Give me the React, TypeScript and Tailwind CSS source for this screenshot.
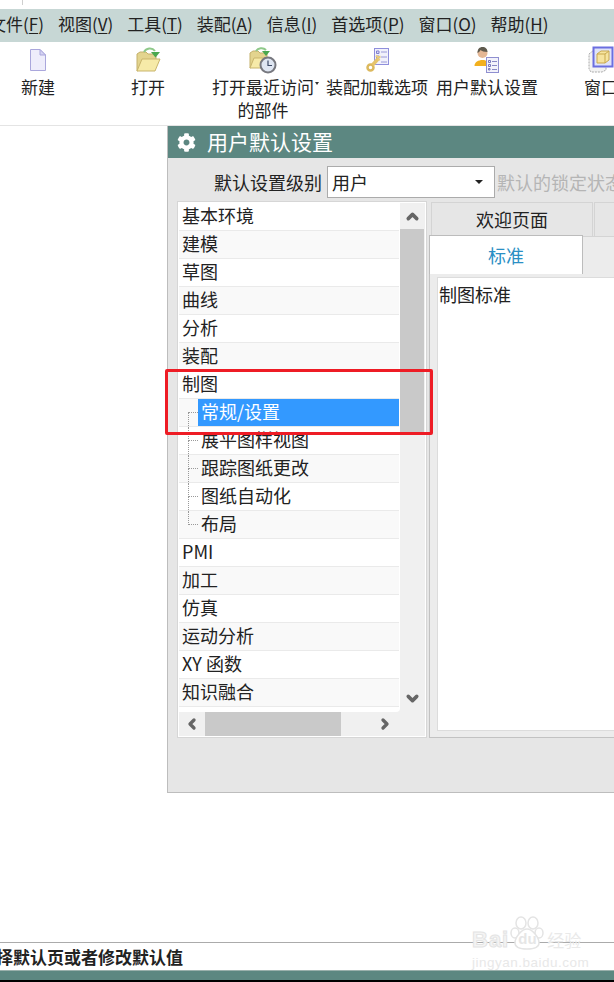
import { ChevronDown, ChevronLeft, ChevronRight, ChevronUp } from 'lucide-react';
import { FaCog } from 'react-icons/fa';

const menus = [
  ['文件(', 'F', ')'],
  ['视图(', 'V', ')'],
  ['工具(', 'T', ')'],
  ['装配(', 'A', ')'],
  ['信息(', 'I', ')'],
  ['首选项(', 'P', ')'],
  ['窗口(', 'O', ')'],
  ['帮助(', 'H', ')'],
];

function DocIcon() {
  return (
    <svg width="28" height="28" viewBox="0 0 28 28">
      <path d="M6.500 3.500h9.500l5.500 5.500v15.500H6.500z" fill="#eeedfb" stroke="#aaa7dc" />
      <path d="M16 3.500v5.500h5.500z" fill="#d5d3f2" stroke="#aaa7dc" />
    </svg>
  );
}

function FolderIcon() {
  return (
    <svg width="28" height="28" viewBox="0 0 28 28">
      <path d="M3 25V8l3-2h6l2 2h8v6z" fill="#e3d48e" stroke="#c4b06a" />
      <path d="M3 25l5-12h18l-5 12z" fill="#f6eaa8" stroke="#c9b56c" />
      <path d="M10 6c2-4 8-5 11-1" fill="none" stroke="#8fc98a" strokeWidth="2" />
      <path d="M17 6h9l-4.500 5.500z" fill="#4aa84f" />
    </svg>
  );
}

function RecentIcon() {
  return (
    <svg width="28" height="28" viewBox="0 0 28 28">
      <path d="M1 22V7l3-2h5l2 2h7v6z" fill="#e3d48e" stroke="#c4b06a" />
      <path d="M1 22l4-10h15l-4 10z" fill="#f6eaa8" stroke="#c9b56c" />
      <path d="M7 5c2-3 7-4 10-1" fill="none" stroke="#8fc98a" strokeWidth="2" />
      <path d="M13 5h8l-4 5z" fill="#4aa84f" />
      <circle cx="19" cy="19" r="7.500" fill="#dfe6f2" stroke="#77787f" strokeWidth="2" />
      <path d="M19 14.500V19.500h4" fill="none" stroke="#3d4a66" strokeWidth="1.200" />
    </svg>
  );
}

function KeyListIcon() {
  return (
    <svg width="28" height="28" viewBox="0 0 28 28">
      <rect x="11.500" y="2.500" width="14" height="16" fill="#f1f1fb" stroke="#8f8fdc" />
      <path d="M13.500 5h2.500v2.500h-2.500zM13.500 10h2.500v2.500h-2.500z" fill="#dcdcf6" stroke="#7f7fcf" />
      <path d="M18 6h6M18 11h6M18 16h6" stroke="#9a9ad8" />
      <circle cx="7.500" cy="21.500" r="3" fill="none" stroke="#dcb95e" strokeWidth="2.500" />
      <path d="M9.500 19l6-6.500" stroke="#e6c46a" strokeWidth="3.500" />
      <path d="M13 9.500l2 2 2.500-1M16.500 14.500l-1.500-2" fill="none" stroke="#e9cd7c" strokeWidth="2" />
    </svg>
  );
}

function PersonListIcon() {
  return (
    <svg width="28" height="28" viewBox="0 0 28 28">
      <circle cx="9.500" cy="7" r="5" fill="#e4b795" />
      <path d="M4.500 7c0-4 2-6 5-6s5 2 5 5c-3 0-6-1-7-2-.5 1-1 2-3 3z" fill="#5f5a4e" />
      <path d="M1.500 20c0-4 4-6 8-6s5 2 6 3v3z" fill="#f2b01e" />
      <rect x="13.500" y="11.500" width="12" height="15" fill="#f2f2fb" stroke="#8f8fd0" />
      <path d="M15.500 14.500h2v2h-2zM15.500 18.500h2v2h-2zM15.500 22.500h1.500v1.500h-1.500z" fill="none" stroke="#7777bb" />
      <path d="M19 15.500h5M19 19.500h5M19 23.500h5" stroke="#8888c4" />
    </svg>
  );
}

function WindowIcon() {
  return (
    <svg width="28" height="28" viewBox="0 0 28 28">
      <path d="M2 8l5-4h12v20l-4 2H4l-2-3z" fill="#f2f2f2" stroke="#aaaaaa" strokeDasharray="2 1" />
      <rect x="6.500" y="1.500" width="19" height="19" fill="#dfe3f8" stroke="#6a6ee0" strokeWidth="2" />
      <path d="M10 8l4-3h8v9l-4 3h-8z" fill="#f6e4a0" stroke="#c9a94f" />
      <path d="M10 8h8v9M18 8l4-3" fill="none" stroke="#c9a94f" />
    </svg>
  );
}

const tools = [
  { w: 'w-[110px]', icon: <DocIcon />, label: '新建' },
  { w: 'w-[110px]', icon: <FolderIcon />, label: '打开' },
  { w: 'w-[120px]', icon: <RecentIcon />, label: '打开最近访问', second: '的部件', more: true },
  { w: 'w-[108px]', icon: <KeyListIcon />, label: '装配加载选项' },
  { w: 'w-[112px]', icon: <PersonListIcon />, label: '用户默认设置' },
  { w: 'w-[116px]', icon: <WindowIcon />, label: '窗口' },
];

type TreeRow = { label: string; child?: boolean; first?: boolean; last?: boolean; selected?: boolean };

const rows: TreeRow[] = [
  { label: '基本环境' },
  { label: '建模' },
  { label: '草图' },
  { label: '曲线' },
  { label: '分析' },
  { label: '装配' },
  { label: '制图' },
  { label: '常规/设置', child: true, first: true, selected: true },
  { label: '展平图样视图', child: true },
  { label: '跟踪图纸更改', child: true },
  { label: '图纸自动化', child: true },
  { label: '布局', child: true, last: true },
  { label: 'PMI' },
  { label: '加工' },
  { label: '仿真' },
  { label: '运动分析' },
  { label: 'XY 函数' },
  { label: '知识融合' },
];

function Connector({ first, last }: { first?: boolean; last?: boolean }) {
  return (
    <div className="ml-[9px] flex h-full w-[10px] shrink-0 flex-col">
      <div className={first ? 'h-[14px] border-b border-dotted border-[#999]' : 'h-[14px] border-b border-l border-dotted border-[#999]'} />
      <div className={last ? 'flex-1' : 'flex-1 border-l border-dotted border-[#999]'} />
    </div>
  );
}

function ListRow({ row, index }: { row: TreeRow; index: number }) {
  const bg = index % 2 === 0 ? 'bg-white' : 'bg-[#f9f9f9]';
  return (
    <div className={`flex h-[28px] w-[220px] items-stretch border-b border-[#eaeaea] text-[18px] leading-[25px] text-[#222] ${bg}`}>
      {row.child ? (
        <>
          <Connector first={row.first} last={row.last} />
          {row.selected ? (
            <div className="flex-1 bg-[#3399ff] pl-[3px] text-white">{row.label}</div>
          ) : (
            <div className="flex-1 pl-[3px]">{row.label}</div>
          )}
        </>
      ) : (
        <div className="pl-[3px]">{row.label}</div>
      )}
    </div>
  );
}

export default function App() {
  return (
    <div className="relative flex h-[982px] w-[614px] flex-col overflow-hidden bg-white font-['Noto_Sans_CJK_SC',sans-serif] text-[#222]">
      <div className="h-[9px] shrink-0">
        <div className="ml-[22px] h-[5px] w-px bg-[#cfcfcf]" />
      </div>

      {/* menu bar */}
      <div className="-ml-[11px] flex h-[33px] shrink-0 items-center gap-[14px] bg-[#c7d7d5] pb-[3px] text-[17px] whitespace-nowrap">
        {menus.map(([a, key, b]) => (
          <span key={a}>
            {a}
            <u className="underline-offset-2">{key}</u>
            {b}
          </span>
        ))}
      </div>

      {/* toolbar */}
      <div className="-ml-[17px] flex h-[84px] w-[660px] shrink-0 border-b border-[#e4e4e4] pt-[4px] text-[17px] leading-[23px]">
        {tools.map((t) => (
          <div key={t.label} className={`flex shrink-0 flex-col items-center whitespace-nowrap ${t.w}`}>
            <div className="mb-[1px] h-[28px]">{t.icon}</div>
            <div className="relative">
              {t.label}
              {t.more && <span className="absolute top-[7px] -right-[5px] h-0 w-0 border-x-[2px] border-t-[3px] border-x-transparent border-t-[#333]" />}
            </div>
            {t.second && <div>{t.second}</div>}
          </div>
        ))}
      </div>

      {/* dialog */}
      <div className="ml-[167px] flex h-[667px] w-[447px] shrink-0 flex-col border-b border-l border-[#bdbdbd] bg-[#e6e6e6]">
        <div className="flex h-[32px] shrink-0 items-center bg-[#5c8781] pl-[9px] text-[21px] text-white">
          <FaCog size={19} />
          <span className="ml-[11px] whitespace-nowrap">用户默认设置</span>
        </div>

        <div className="mt-[8px] flex h-[32px] shrink-0 items-center whitespace-nowrap text-[18px]">
          <span className="ml-[46px] w-[107px]">默认设置级别</span>
          <div className="ml-[6px] flex h-[32px] w-[168px] shrink-0 items-center justify-between border border-[#ababab] bg-white pr-[11px] pl-[4px]">
            <span>用户</span>
            <span className="h-0 w-0 border-x-[4px] border-t-[4px] border-x-transparent border-t-[#222]" />
          </div>
          <span className="ml-[2px] text-[#b5b5b5]">默认的锁定状态</span>
        </div>

        <div className="mt-[3px] flex h-[538px] shrink-0">
          {/* tree list */}
          <div className="ml-[9px] flex h-[537px] w-[250px] shrink-0 border border-[#d6d6d6] bg-white p-px">
            <div className="flex w-[221px] shrink-0 flex-col bg-[#f0f0f0]">
              <div className="h-[509px] shrink-0 rounded-br-[4px] bg-white">
                {rows.map((row, i) => (
                  <ListRow key={row.label} row={row} index={i} />
                ))}
              </div>
              <div className="flex h-[24px] shrink-0 items-center text-[#666]">
                <div className="flex w-[26px] justify-center">
                  <ChevronLeft size={16} strokeWidth={5} />
                </div>
                <div className="h-full w-[136px] bg-[#c9c9c9]" />
                <div className="ml-[36px] flex w-[16px] justify-center">
                  <ChevronRight size={16} strokeWidth={5} />
                </div>
              </div>
            </div>
            <div className="flex w-[25px] shrink-0 flex-col bg-[#f0f0f0] text-[#666]">
              <div className="flex h-[26px] shrink-0 items-center justify-center">
                <ChevronUp size={17} strokeWidth={5} />
              </div>
              <div className="h-[204px] w-[24px] shrink-0 bg-[#c9c9c9]" />
              <div className="flex-1" />
              <div className="mb-[25px] flex h-[26px] shrink-0 items-center justify-center">
                <ChevronDown size={17} strokeWidth={5} />
              </div>
            </div>
          </div>

          {/* tabs */}
          <div className="ml-[2px] flex h-[537px] flex-1 flex-col">
            <div className="ml-[2px] flex h-[35px] shrink-0 gap-px pt-px">
              <div className="flex w-[162px] shrink-0 items-center justify-center border-x border-t border-[#d4d4d4] text-[18px] leading-[25px]">欢迎页面</div>
              <div className="flex-1 border-t border-l border-[#d4d4d4]" />
            </div>
            <div className="flex flex-1 flex-col border-t border-b border-l border-t-[#d4d4d4] border-b-[#c2c2c2] border-l-[#c2c2c2] bg-[#ececec]">
              <div className="-mt-[2px] -ml-px flex h-[39px] w-[154px] shrink-0 items-center justify-center border-x border-t border-[#bcbcbc] bg-white text-[18px] leading-[25px] text-[#2b8fc4]">标准</div>
              <div className="mt-[3px] mb-[6px] ml-[7px] flex-1 border-t border-b border-l border-[#dcdcdc] bg-white pt-[3px] pl-px text-[18px] leading-[27px]">制图标准</div>
            </div>
          </div>
        </div>
      </div>

      <div className="flex-1" />

      {/* status bar */}
      <div className="flex h-[28px] shrink-0 items-center border-t border-[#ababab] text-[17px] font-bold whitespace-nowrap">
        <span className="-ml-[21px]">选择默认页或者修改默认值</span>
      </div>
      <div className="h-[10px] shrink-0 border-t border-[#9ab0ac] bg-[#5c8781]" />
      <div className="h-[2px] shrink-0 bg-black" />

      {/* red annotation */}
      <div className="absolute top-[369px] left-[165px] h-[66px] w-[268px] rounded-[2px] border-[3px] border-[#ee1c25]" />

      {/* watermark */}
      <div className="absolute top-[916px] left-[472px] flex w-[108px] flex-col text-[#e8e8e8]">
        <div className="flex h-[34px] items-end whitespace-nowrap">
          <span className="font-['Liberation_Sans',sans-serif] text-[22px] leading-[20px] font-bold tracking-[1px] text-[#f4f4f4] [-webkit-text-stroke:1px_#e4e4e4]">Bai</span>
          <div className="relative ml-[1px] h-[34px] w-[34px] shrink-0">
            <svg width="34" height="34" viewBox="0 0 34 34" className="block">
              <g fill="#ffffff" stroke="#e4e4e4" strokeWidth="1.500">
                <ellipse cx="11" cy="7" rx="5" ry="6" />
                <ellipse cx="23" cy="7" rx="5" ry="6" />
                <ellipse cx="5" cy="17" rx="4" ry="5" />
                <ellipse cx="29" cy="17" rx="4" ry="5" />
                <path d="M17 13c5 0 12 8 12 14 0 5-5 6-12 6s-12-1-12-6c0-6 7-14 12-14z" />
              </g>
            </svg>
            <span className="absolute top-[15px] left-[8px] font-['Liberation_Sans',sans-serif] text-[15px] leading-[16px] font-bold text-[#e6e6e6]">du</span>
          </div>
          <span className="ml-[3px] text-[17px] leading-[20px] text-[#e9e9e9]">经验</span>
        </div>
        <div className="mt-[6px] font-['Liberation_Sans',sans-serif] text-[13.500px] leading-[14px] tracking-[0.5px] whitespace-nowrap">jingyan.baidu.com</div>
      </div>
    </div>
  );
}
